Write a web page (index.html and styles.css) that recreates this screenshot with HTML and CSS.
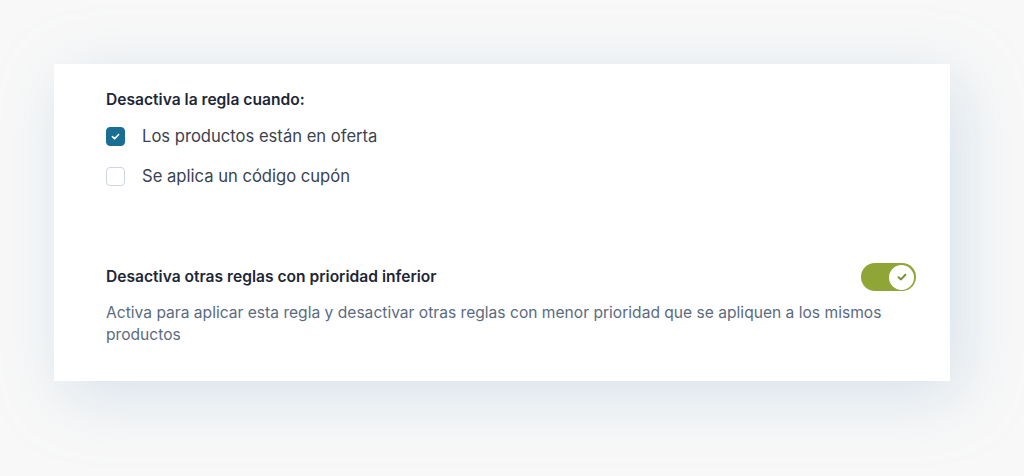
FILE: index.html
```html
<!DOCTYPE html>
<html lang="es">
<head>
<meta charset="utf-8">
<link rel="stylesheet" href="styles.css">
</head>
<body>
<div class="card">
  <div class="group">
    <div class="label">Desactiva la regla cuando:</div>
    <label class="check-row">
      <span class="box checked">
        <svg viewBox="0 0 12 12" width="11" height="11"><path d="M2.6 6.2 L5 8.4 L9.4 3.8" fill="none" stroke="#fff" stroke-width="1.8" stroke-linecap="round" stroke-linejoin="round"/></svg>
      </span>
      <span class="check-text">Los productos están en oferta</span>
    </label>
    <label class="check-row">
      <span class="box"></span>
      <span class="check-text">Se aplica un código cupón</span>
    </label>
  </div>
  <div class="setting">
    <div class="setting-head">
      <div class="label">Desactiva otras reglas con prioridad inferior</div>
      <span class="toggle">
        <span class="knob">
          <svg viewBox="0 0 12 12" width="12" height="12"><path d="M2.6 6.2 L5 8.4 L9.4 3.8" fill="none" stroke="#7a9030" stroke-width="2" stroke-linecap="round" stroke-linejoin="round"/></svg>
        </span>
      </span>
    </div>
    <p class="desc">Activa para aplicar esta regla y desactivar otras reglas con menor prioridad que se apliquen a los mismos productos</p>
  </div>
</div>
</body>
</html>
```

FILE: styles.css
```css
* { box-sizing: border-box; }
html, body { margin: 0; }
body {
  background: #f8f8f8;
  font-family: Inter, "Noto Sans", "Liberation Sans", sans-serif;
  padding: 64px 0 0 54px;
  height: 476px;
  overflow: hidden;
}
.card {
  width: 896px;
  height: 317px;
  background: #fff;
  padding: 26px 34px 0 52px;
  box-shadow: 10px 14px 60px rgba(160, 190, 212, 0.38);
}
.label {
  font-size: 15.6px;
  line-height: 20px;
  font-weight: 600;
  color: #1d2736;
}
.group { display: flex; flex-direction: column; }
.group .label { margin-bottom: 6px; }
.check-row {
  display: flex;
  align-items: center;
  gap: 17px;
  height: 40px;
}
.box {
  width: 19px;
  height: 19px;
  border: 1.5px solid #cfd5df;
  border-radius: 4px;
  background: #fff;
  display: flex;
  align-items: center;
  justify-content: center;
}
.box.checked {
  background: #196f93;
  border-color: #196f93;
}
.check-text {
  font-size: 16.6px;
  color: #3b4350;
}
.setting { margin-top: 67px; }
.setting-head {
  display: flex;
  align-items: center;
  justify-content: space-between;
  height: 28px;
}
.toggle {
  width: 55px;
  height: 28px;
  border-radius: 14px;
  background: #8fa637;
  display: flex;
  align-items: center;
  justify-content: flex-end;
  padding-right: 2px;
}
.knob {
  width: 25px;
  height: 25px;
  border-radius: 50%;
  background: #fff;
  display: flex;
  align-items: center;
  justify-content: center;
}
.desc {
  margin: 11px 0 0;
  font-size: 15.6px;
  line-height: 22px;
  color: #5b6b80;
  max-width: 800px;
}
```
